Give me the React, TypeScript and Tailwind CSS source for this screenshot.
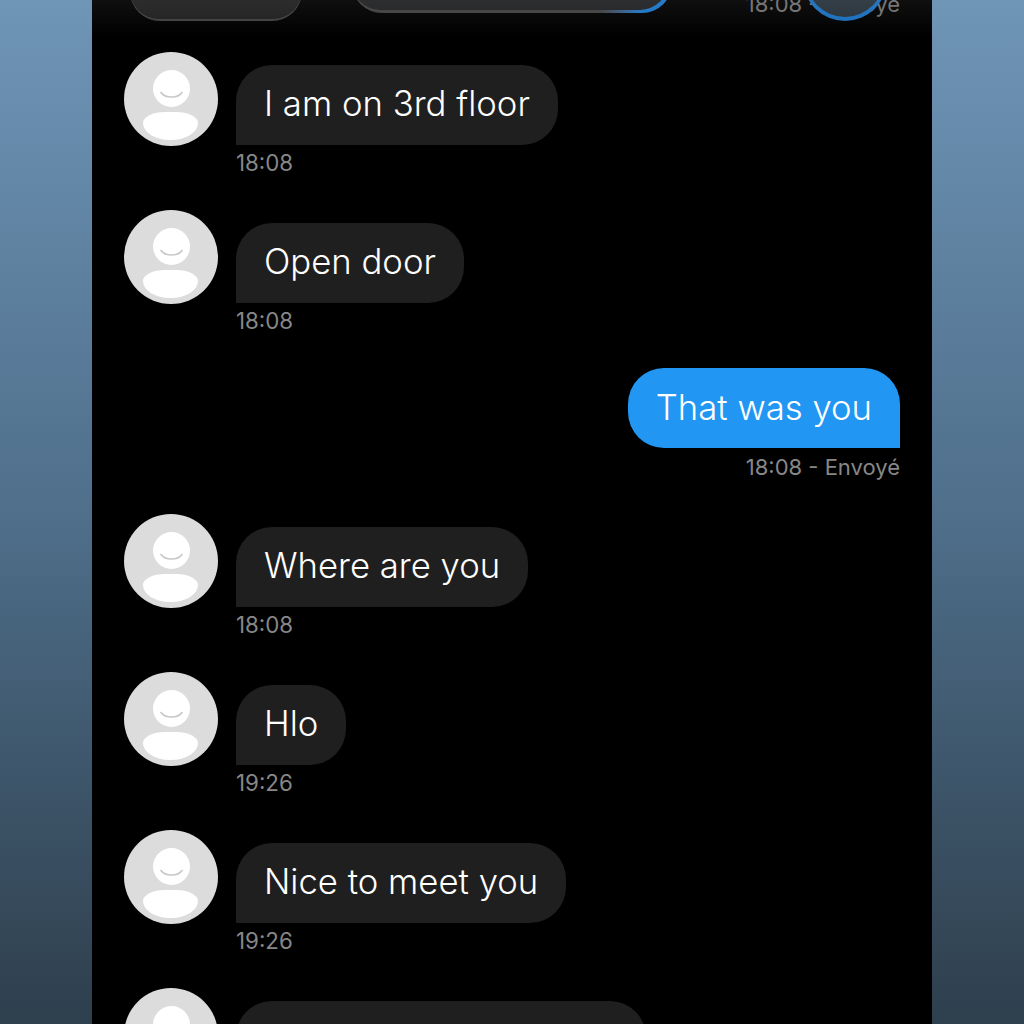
const font = { fontFamily: "Inter, 'Liberation Sans', sans-serif" };

function Avatar() {
  return (
    <div className="relative h-[94px] w-[94px] shrink-0 overflow-hidden rounded-full bg-[#dcdcdd]">
      <div className="absolute left-[29px] top-[18px] h-[37px] w-[37px] rounded-full bg-white">
        <svg className="absolute left-[7px] top-[21px]" width="23" height="9" viewBox="0 0 23 9" fill="none">
          <path d="M1 1.5C5 7.5 18 7.5 22 1.5" stroke="#c8c8c8" strokeWidth="1.6" strokeLinecap="round" />
        </svg>
      </div>
      <div className="absolute left-[19px] top-[60px] h-[28px] w-[55px] rounded-[22px_22px_27px_27px/11px_11px_17px_17px] bg-white" />
    </div>
  );
}

function Received({ text, time, mt }: { text: string; time: string; mt: string }) {
  return (
    <div className={`flex gap-[18px] ${mt}`}>
      <Avatar />
      <div className="mt-[13px] flex flex-col items-start">
        <div className="flex h-[80px] items-center rounded-[36px] rounded-bl-none bg-[#1f1f1f] px-[28px] pb-[3px] text-[34.7px] font-[350] text-white">
          {text}
        </div>
        <div className="mt-[5px] text-[22.3px] leading-[26px] text-[#878787]">{time}</div>
      </div>
    </div>
  );
}

export default function App() {
  return (
    <div
      className="flex h-[1024px] justify-center overflow-hidden bg-gradient-to-b from-[#6f95b7] via-[#4f6f8b] to-[#2e3f4d]"
      style={font}
    >
      <div className="relative h-[1024px] w-[840px] overflow-hidden bg-black px-[32px]">
        {/* cropped previous row */}
        <div className="relative flex h-[21px] items-end">
          <div className="ml-[6px] h-[60px] w-[172px] shrink-0 rounded-[30px] bg-[#3f3f3f] pb-[2px]">
            <div className="h-full rounded-[30px] bg-[#1f1f1f]" />
          </div>
          <div className="mb-[8px] ml-[50px] h-[60px] w-[320px] shrink-0 rounded-[30px] bg-gradient-to-r from-[#3f3f3f] from-[78%] to-[#1b74c4] to-[90%] pb-[3px] pr-[4px]">
            <div className="h-full rounded-[28px] bg-[#1f2123]" />
          </div>
          <div className="ml-auto mb-[4px] text-[22px] leading-[26px] text-[#6f6f6f]">18:08 - Envoyé</div>
          <div className="absolute bottom-0 left-[679px] h-[104px] w-[84px] rounded-[52px] bg-[#1a6ebc] px-[3px] pb-[4px]">
            <div className="h-full rounded-[50px] bg-[#27323b]" />
          </div>
        </div>
        <div className="pointer-events-none absolute left-0 right-0 top-0 h-[38px] bg-gradient-to-b from-white/[0.06] to-transparent" />

        <Received mt="mt-[31px]" text="I am on 3rd floor" time="18:08" />
        <Received mt="mt-[34px]" text="Open door" time="18:08" />

        <div className="mt-[34px] flex flex-col items-end">
          <div className="flex h-[80px] items-center rounded-[36px] rounded-br-none bg-[#2196f3] px-[28px] pb-[1px] text-[34.7px] font-[350] text-white">
            That was you
          </div>
          <div className="mt-[6px] text-[22px] leading-[26px] text-[#878787]">18:08 - Envoyé</div>
        </div>

        <Received mt="mt-[34px]" text="Where are you" time="18:08" />
        <Received mt="mt-[34px]" text="Hlo" time="19:26" />
        <Received mt="mt-[34px]" text="Nice to meet you" time="19:26" />
        <div className="mt-[34px] flex gap-[18px]">
          <Avatar />
          <div className="mt-[13px] h-[80px] w-[410px] rounded-[36px] bg-[#1f1f1f]" />
        </div>
      </div>
    </div>
  );
}
